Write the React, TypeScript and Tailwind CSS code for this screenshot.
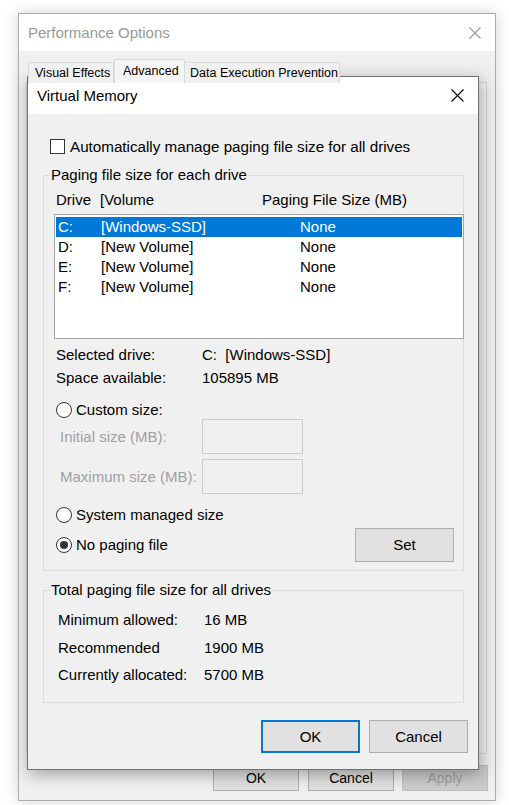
import React from "react";

function XIcon({ size, color }: { size: number; color: string }) {
  return (
    <svg width={size} height={size} viewBox={`0 0 ${size} ${size}`} fill="none">
      <line x1="0.5" y1="0.5" x2={size - 0.5} y2={size - 0.5} stroke={color} strokeWidth="1.1" />
      <line x1={size - 0.5} y1="0.5" x2="0.5" y2={size - 0.5} stroke={color} strokeWidth="1.1" />
    </svg>
  );
}

function Radio({ checked }: { checked?: boolean }) {
  return (
    <div className="w-[16px] h-[16px] rounded-full border border-[#333333] bg-white flex items-center justify-center shrink-0">
      {checked && <div className="w-[8px] h-[8px] rounded-full bg-[#333333]" />}
    </div>
  );
}

const drives = [
  { d: "C:", v: "[Windows-SSD]", s: "None", sel: true },
  { d: "D:", v: "[New Volume]", s: "None" },
  { d: "E:", v: "[New Volume]", s: "None" },
  { d: "F:", v: "[New Volume]", s: "None" },
];

export default function App() {
  return (
    <div className="relative w-[509px] h-[805px] bg-white overflow-hidden font-['Liberation_Sans','Arial',sans-serif] text-[15px] text-black leading-[18px]">
      {/* Outer window: Performance Options */}
      <div className="absolute left-[18px] top-[13px] w-[478px] h-[788px] border border-[#ababab] bg-[#f0f0f0] shadow-[0_0_14px_rgba(0,0,0,0.18)] flex flex-col">
        <div className="h-[37px] bg-white flex items-center justify-between pl-[9px] pr-[14px] text-[#999999]">
          <span>Performance Options</span>
          <XIcon size={12} color="#9a9a9a" />
        </div>
        <div className="flex items-end h-[24px] mt-[8px] ml-[9px] -mb-[1px] relative z-10 text-[12.5px]">
          <div className="w-[86px] h-[21px] border border-b-0 border-[#d9d9d9] bg-[#f0f0f0] pl-[6px] flex items-center">Visual Effects</div>
          <div className="w-[71px] h-[24px] border border-b-0 border-[#d9d9d9] bg-[#f5f5f5] pl-[8px] pt-[2px]">Advanced</div>
          <div className="w-[155px] h-[21px] border border-b-0 border-l-0 border-[#d9d9d9] bg-[#f0f0f0] pl-[5px] flex items-center">Data Execution Prevention</div>
        </div>
        <div className="h-[672px] ml-[7px] mr-[8px] border border-[#d9d9d9] bg-[#f5f5f5]" />
        <div className="flex justify-end mt-[11px] pr-[7px] text-[14px]">
          <div className="w-[86px] h-[26px] border border-[#adadad] bg-[#e1e1e1] flex items-center justify-center">OK</div>
          <div className="w-[86px] h-[26px] ml-[9px] border border-[#adadad] bg-[#e1e1e1] flex items-center justify-center">Cancel</div>
          <div className="w-[86px] h-[26px] ml-[8px] border border-[#bfbfbf] bg-[#cccccc] text-[#a0a0a0] flex items-center justify-center">Apply</div>
        </div>
      </div>

      {/* Inner dialog: Virtual Memory */}
      <div className="absolute left-[27px] top-[76px] w-[452px] h-[694px] border border-[#707070] bg-[#f0f0f0] shadow-[2px_4px_16px_rgba(0,0,0,0.35)] flex flex-col">
        <div className="h-[37px] bg-white flex items-center justify-between pl-[9px] pr-[14px] shrink-0">
          <span>Virtual Memory</span>
          <XIcon size={13} color="#000000" />
        </div>

        <div className="flex flex-col pl-[15px] pr-[14px]">
          {/* checkbox */}
          <div className="flex items-center h-[15px] mt-[25px] pl-[7px]">
            <div className="w-[15px] h-[15px] border border-[#333333] bg-white shrink-0" />
            <span className="ml-[5px] text-[15.2px]">Automatically manage paging file size for all drives</span>
          </div>

          {/* Group 1 */}
          <fieldset className="mt-[11px] border border-[#dcdcdc] pb-[8px]">
            <legend className="ml-[6px] px-[1px] leading-[20px]">Paging file size for each drive</legend>
            <div className="flex items-center h-[20px] mt-[5px] pl-[12px]">
              <span className="w-[44px]">Drive</span>
              <span className="w-[162px]">[Volume</span>
              <span>Paging File Size (MB)</span>
            </div>
            <div className="mt-[4px] ml-[10px] -mr-[1px] h-[125px] border border-[#a6a6a6] bg-white pt-[2px] px-[1px]">
              {drives.map((r) => (
                <div
                  key={r.d}
                  className={`flex items-center h-[20px] pl-[2px] ${r.sel ? "bg-[#0078d7] text-white" : ""}`}
                >
                  <span className="w-[43px]">{r.d}</span>
                  <span className="w-[199px]">{r.v}</span>
                  <span>{r.s}</span>
                </div>
              ))}
            </div>

            <div className="flex items-center h-[20px] mt-[6px] pl-[12px]">
              <span className="w-[146px]">Selected drive:</span>
              <span>C:&nbsp;&nbsp;[Windows-SSD]</span>
            </div>
            <div className="flex items-center h-[20px] mt-[3px] pl-[12px]">
              <span className="w-[146px]">Space available:</span>
              <span>105895 MB</span>
            </div>

            <div className="flex items-center h-[18px] mt-[13px] pl-[12px]">
              <Radio />
              <span className="ml-[4px]">Custom size:</span>
            </div>
            <div className="flex items-center h-[35px] pl-[16px]">
              <span className="w-[142px] text-[#a0a0a0]">Initial size (MB):</span>
              <div className="w-[101px] h-[35px] border border-[#cccccc] bg-[#f0f0f0]" />
            </div>
            <div className="flex items-center h-[35px] mt-[5px] pl-[16px]">
              <span className="w-[142px] text-[#a0a0a0]">Maximum size (MB):</span>
              <div className="w-[101px] h-[35px] border border-[#cccccc] bg-[#f0f0f0]" />
            </div>

            <div className="flex items-center h-[18px] mt-[12px] pl-[12px]">
              <Radio />
              <span className="ml-[4px]">System managed size</span>
            </div>
            <div className="flex items-center h-[34px] mt-[4px] pl-[12px] pr-[9px]">
              <Radio checked />
              <span className="ml-[4px]">No paging file</span>
              <div className="ml-auto w-[99px] h-[34px] border border-[#adadad] bg-[#e1e1e1] flex items-center justify-center">Set</div>
            </div>
          </fieldset>

          {/* Group 2 */}
          <fieldset className="mt-[9px] border border-[#dcdcdc] pb-[17px]">
            <legend className="ml-[6px] px-[1px] leading-[20px]">Total paging file size for all drives</legend>
            <div className="flex items-center h-[20px] mt-[10px] pl-[14px]">
              <span className="w-[146px]">Minimum allowed:</span>
              <span>16 MB</span>
            </div>
            <div className="flex items-center h-[20px] mt-[8px] pl-[14px]">
              <span className="w-[146px]">Recommended</span>
              <span>1900 MB</span>
            </div>
            <div className="flex items-center h-[20px] mt-[7px] pl-[14px]">
              <span className="w-[146px]">Currently allocated:</span>
              <span>5700 MB</span>
            </div>
          </fieldset>
        </div>

        <div className="flex justify-end mt-[17px] pr-[10px]">
          <div className="w-[99px] h-[33px] border-2 border-[#0078d7] bg-[#e1e1e1] flex items-center justify-center">OK</div>
          <div className="w-[99px] h-[33px] ml-[9px] border border-[#adadad] bg-[#e1e1e1] flex items-center justify-center">Cancel</div>
        </div>
      </div>
    </div>
  );
}
